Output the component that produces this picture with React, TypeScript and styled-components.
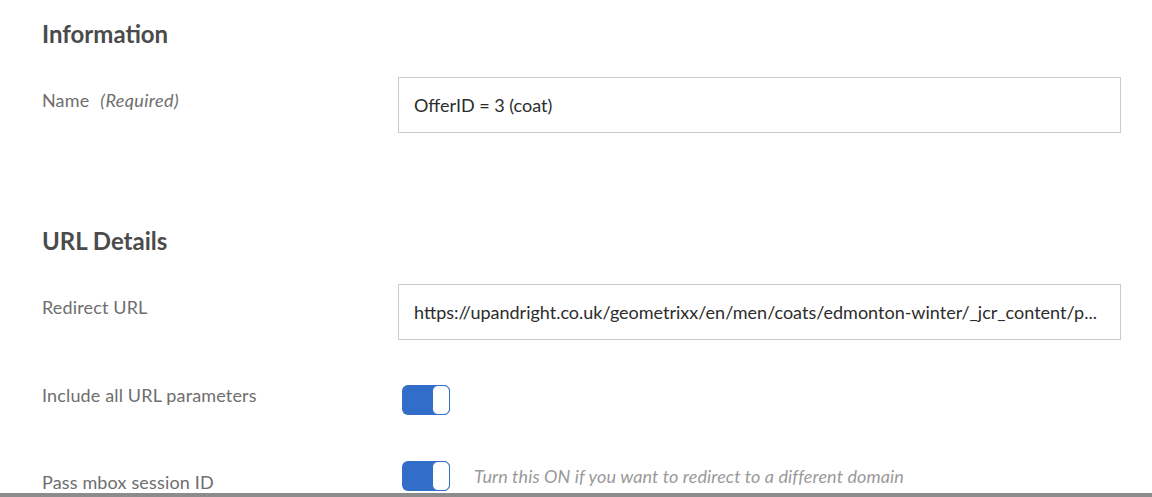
import React from 'react';
import styled, { createGlobalStyle } from 'styled-components';

const GlobalStyle = createGlobalStyle`
    html, body {
        margin: 0;
        padding: 0;
        background: #ffffff;
    }
    * {
        box-sizing: border-box;
    }
`;

const Page = styled.div`
    height: 497px;
    overflow: hidden;
    padding: 19px 31px 0 42px;
    border-bottom: 4px solid #8c8c8c;
    font-family: Lato, "Open Sans", sans-serif;
    background: #ffffff;
`;

const Section = styled.section<{ $gap: number }>`
    margin-bottom: ${props => props.$gap}px;
`;

const SectionTitle = styled.h2`
    margin: 0 0 28px 0;
    font-size: 24px;
    line-height: 30px;
    font-weight: 700;
    color: #4b4b4b;
`;

const Row = styled.div<{ $spacing?: number }>`
    display: grid;
    grid-template-columns: 356px 1fr;
    align-items: center;
    margin-bottom: ${props => props.$spacing ?? 0}px;
`;

const Label = styled.div<{ $shift?: number }>`
    font-size: 18px;
    line-height: 24px;
    letter-spacing: 0.15px;
    color: #6e6e6e;
    margin-top: ${props => props.$shift ?? -10}px;
`;

const Required = styled.span`
    font-style: italic;
    margin-left: 11px;
    letter-spacing: 0.4px;
`;

const TextField = styled.div`
    height: 56px;
    border: 1px solid #cccccc;
    padding: 0 15px;
    display: flex;
    align-items: center;
    font-size: 18px;
    color: #2c2c2c;
    white-space: nowrap;
    overflow: hidden;
    text-overflow: ellipsis;
`;

const ToggleLine = styled.div`
    display: flex;
    align-items: center;
    gap: 24px;
`;

const Track = styled.div<{ $on: boolean }>`
    width: 48px;
    height: 30px;
    margin-left: 4px;
    border-radius: 6px;
    background: ${props => props.$on ? '#316dc9' : '#b3b3b3'};
    display: flex;
    justify-content: ${props => props.$on ? 'flex-end' : 'flex-start'};
`;

const Knob = styled.div`
    width: 18px;
    height: 30px;
    border-radius: 6px;
    background: #ffffff;
    border: 1.5px solid #316dc9;
`;

const Hint = styled.span`
    font-size: 18px;
    font-style: italic;
    letter-spacing: 0.1px;
    color: #9a9a9a;
`;

const Toggle: React.FC<{ on: boolean }> = ({ on }) => (
    <Track $on={on}>
        <Knob />
    </Track>
);

const App: React.FC = () => {
    return (
        <>
            <GlobalStyle />
            <Page>
                <Section $gap={93}>
                    <SectionTitle>Information</SectionTitle>
                    <Row>
                        <Label>
                            Name<Required>(Required)</Required>
                        </Label>
                        <TextField>OfferID = 3 (coat)</TextField>
                    </Row>
                </Section>
                <Section $gap={0}>
                    <SectionTitle>URL Details</SectionTitle>
                    <Row $spacing={45}>
                        <Label>Redirect URL</Label>
                        <TextField>
                            https://upandright.co.uk/geometrixx/en/men/coats/edmonton-winter/_jcr_content/p...
                        </TextField>
                    </Row>
                    <Row $spacing={43}>
                        <Label>Include all URL parameters</Label>
                        <ToggleLine>
                            <Toggle on />
                        </ToggleLine>
                    </Row>
                    <Row>
                        <Label $shift={12}>Pass mbox session ID</Label>
                        <ToggleLine>
                            <Toggle on />
                            <Hint>Turn this ON if you want to redirect to a different domain</Hint>
                        </ToggleLine>
                    </Row>
                </Section>
            </Page>
        </>
    );
};

export default App;
